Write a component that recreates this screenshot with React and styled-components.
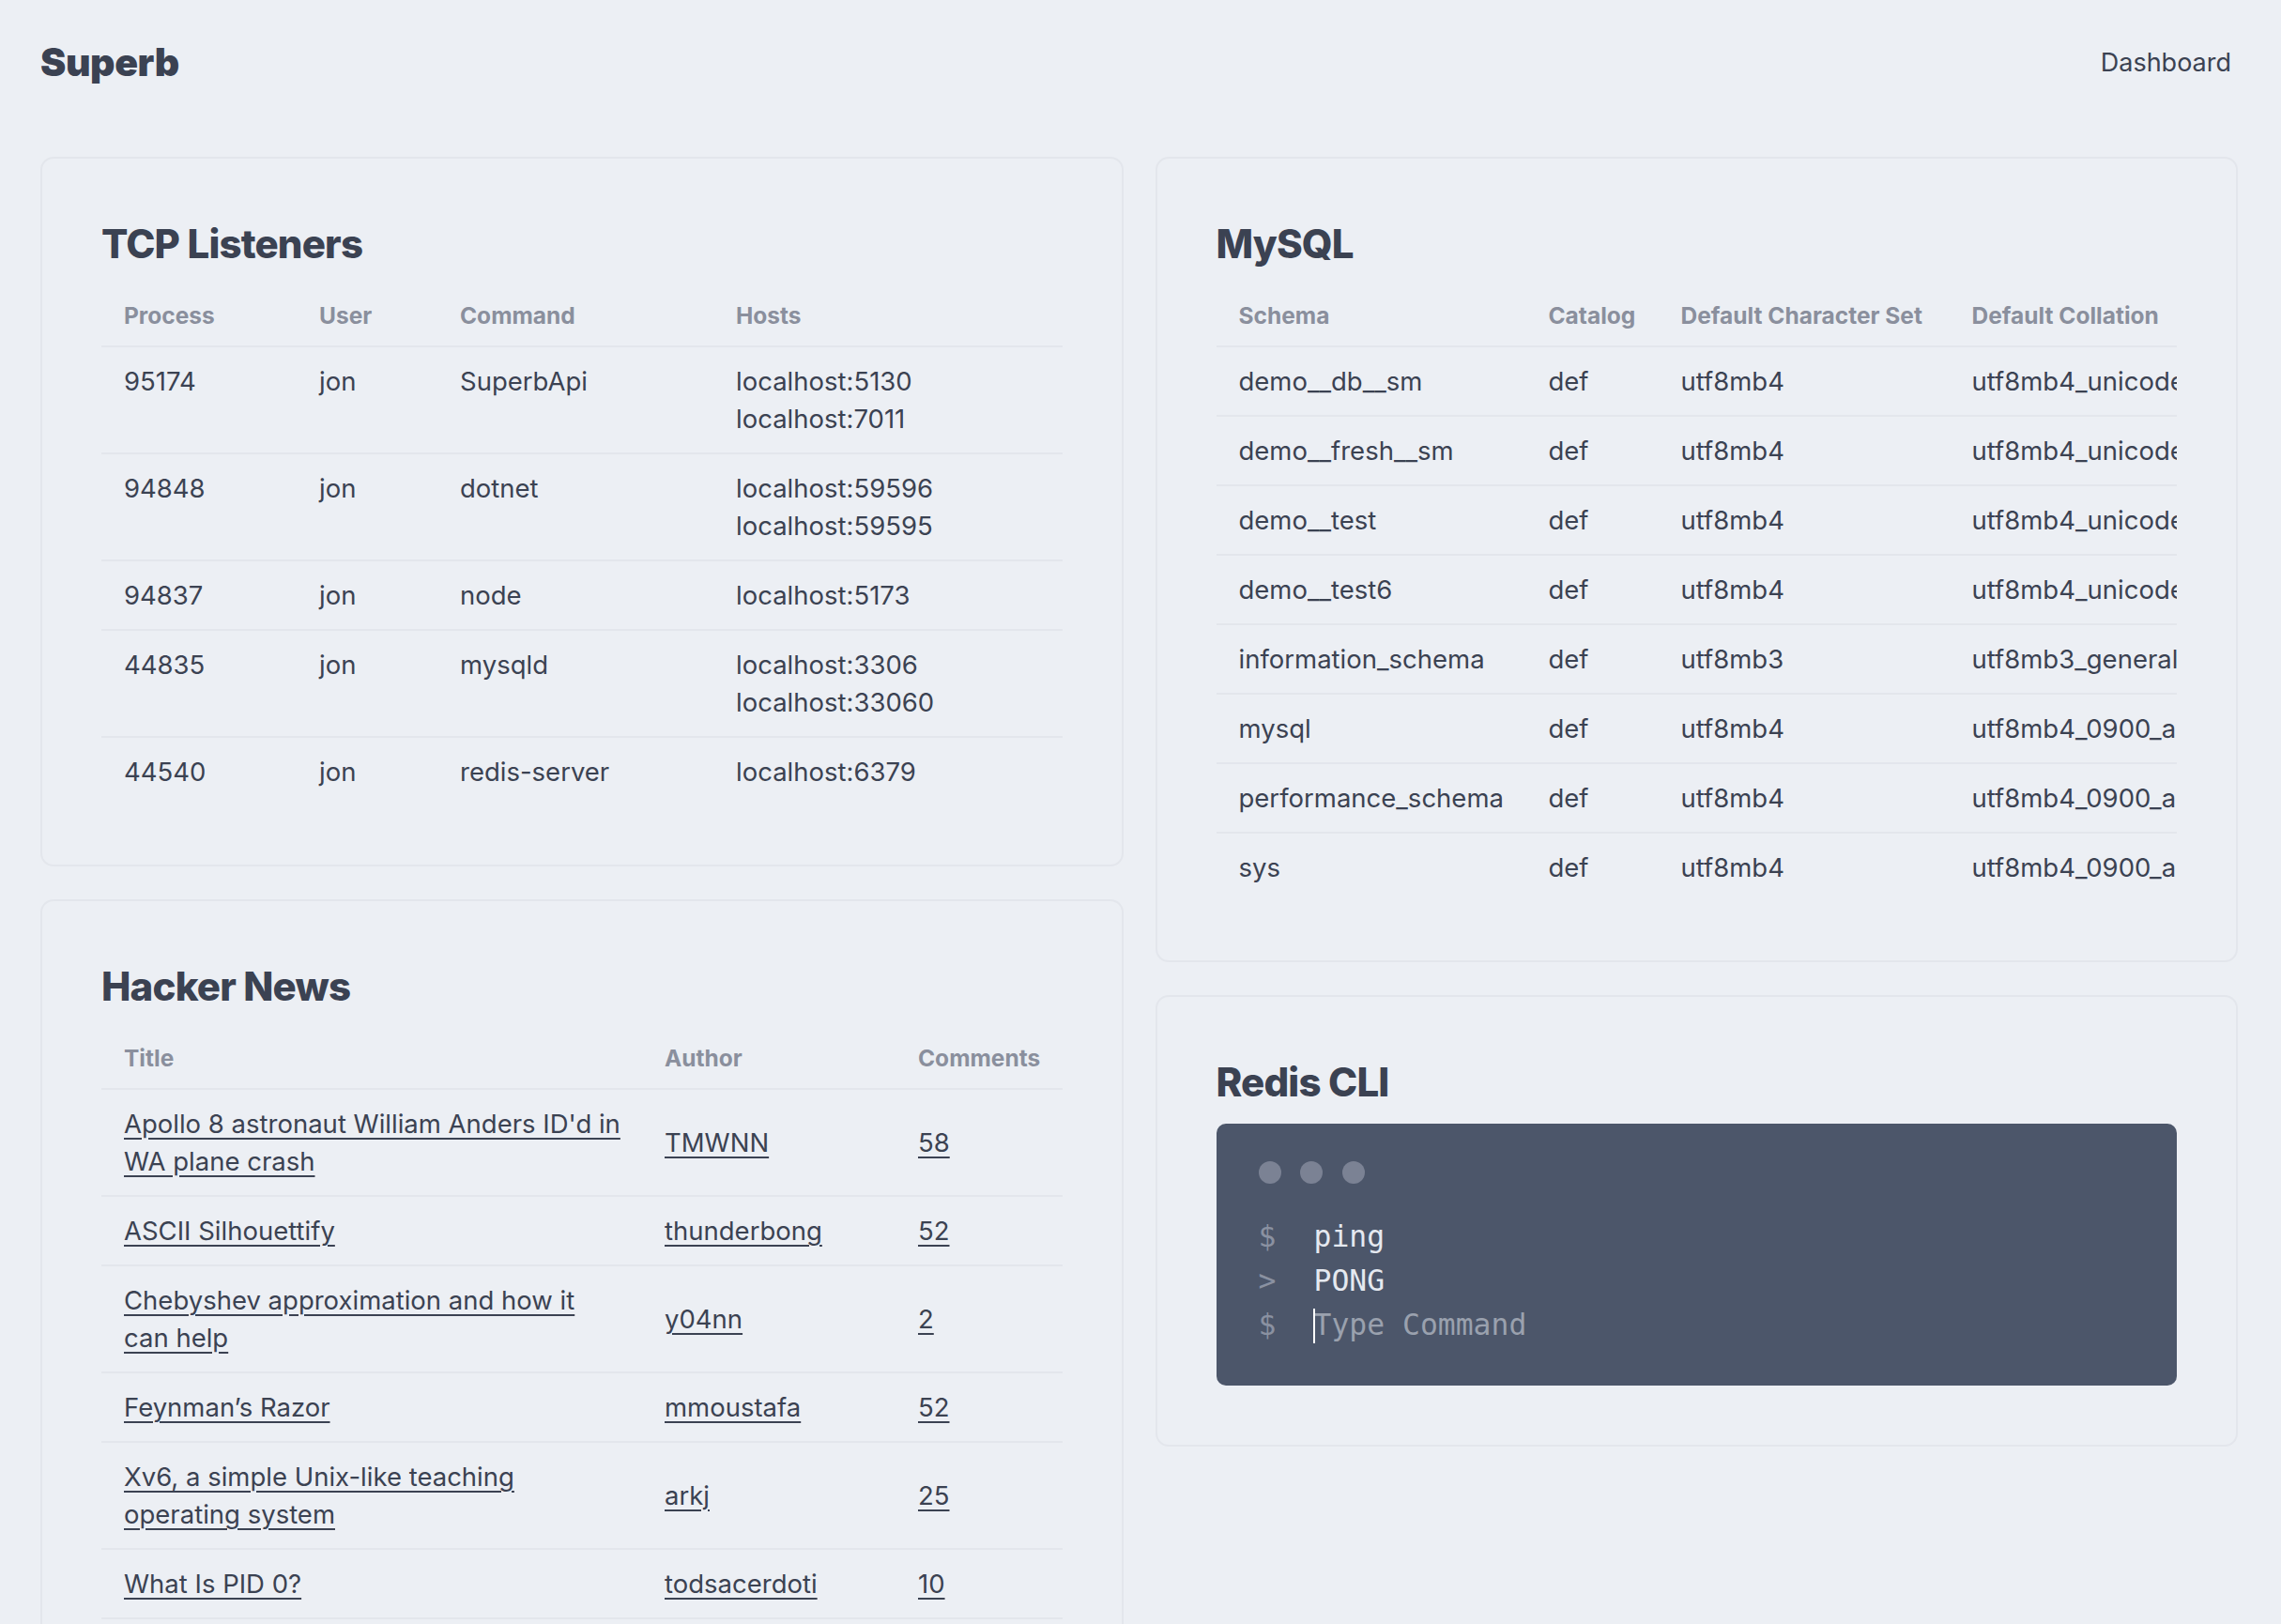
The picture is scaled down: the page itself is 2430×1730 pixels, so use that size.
import React from 'react';
import styled, { createGlobalStyle } from 'styled-components';

const GlobalStyle = createGlobalStyle`
  html, body { margin: 0; padding: 0; background: #eceff4; }
  body {
    font-family: Inter, "Noto Sans", sans-serif;
    color: #3b4252;
    -webkit-font-smoothing: antialiased;
  }
  *, *::before, *::after { box-sizing: border-box; }
`;

const Page = styled.div`
  min-height: 100vh;
  padding: 0 46px 60px 43px;
`;

const Header = styled.header`
  height: 132px;
  display: flex;
  align-items: center;
  justify-content: space-between;
`;

const Brand = styled.a`
  font-size: 41px;
  font-weight: 900;
  letter-spacing: -0.01em;
  color: #3b4252;
  text-decoration: none;
`;

const NavLink = styled.a`
  font-size: 27px;
  padding: 0 7px;
  color: #3b4252;
  text-decoration: none;
`;

const Grid = styled.main`
  margin-top: 35px;
  display: grid;
  grid-template-columns: 1fr 1fr;
  gap: 34px;
  align-items: start;
`;

const Column = styled.div`
  display: flex;
  flex-direction: column;
  gap: 35px;
  min-width: 0;
`;

const Card = styled.section`
  border: 2px solid #e3e6ec;
  border-radius: 14px;
  padding: 63px;
  min-width: 0;
`;

const CardTitle = styled.h2`
  margin: 0 0 16px;
  font-size: 42px;
  line-height: 56px;
  font-weight: 800;
  letter-spacing: -0.02em;
  color: #3b4252;
`;

const TableWrap = styled.div`
  overflow: hidden;
`;

const Table = styled.table`
  border-collapse: collapse;
  table-layout: fixed;
  width: ${(p) => (p.$width ? `${p.$width}px` : '100%')};
`;

const Th = styled.th`
  text-align: left;
  padding: 15px 24px;
  font-size: 24.5px;
  line-height: 34px;
  font-weight: 700;
  color: #8a8f9d;
  white-space: nowrap;
  border-bottom: 2px solid #e3e6ec;
`;

const Row = styled.tr`
  border-bottom: 2px solid #e3e6ec;
  &:last-child {
    border-bottom: ${(p) => (p.$continues ? '2px solid #e3e6ec' : '0')};
  }
`;

const Td = styled.td`
  padding: 16px ${(p) => p.$padRight || 24}px 16px 24px;
  font-size: 27.5px;
  line-height: 40px;
  vertical-align: ${(p) => p.$valign || 'top'};
  white-space: ${(p) => (p.$nowrap ? 'nowrap' : 'normal')};
  overflow: hidden;
`;

const Link = styled.a`
  color: #3b4252;
  text-decoration: underline;
  text-decoration-thickness: 2px;
  text-underline-offset: 5px;
`;

const Terminal = styled.div`
  background: #4c566a;
  border-radius: 10px;
  padding: 40px 45px 41px;
  font-family: "DejaVu Sans Mono", "Liberation Mono", monospace;
  font-size: 31.4px;
  line-height: 47px;
`;

const Dots = styled.div`
  display: flex;
  gap: 20.5px;
  margin-bottom: 32.5px;
`;

const Dot = styled.span`
  width: 24px;
  height: 24px;
  border-radius: 50%;
  background: #7b8294;
`;

const Line = styled.div`
  display: flex;
  align-items: center;
  height: 47px;
`;

const Prompt = styled.span`
  flex: none;
  width: 59px;
  color: #8a91a1;
`;

const Output = styled.span`
  color: #e5e9f0;
`;

const InputWrap = styled.div`
  position: relative;
  flex: 1;
`;

const Input = styled.input`
  display: block;
  width: 100%;
  height: 47px;
  margin: 0;
  padding: 0;
  border: 0;
  outline: none;
  background: transparent;
  font: inherit;
  line-height: 47px;
  color: #e5e9f0;
  caret-color: transparent;
  &::placeholder {
    color: #9aa1ae;
  }
`;

const Caret = styled.span`
  position: absolute;
  left: -1px;
  top: 6px;
  width: 2px;
  height: 37px;
  background: #ffffff;
`;

const tcp = [
  { pid: '95174', user: 'jon', cmd: 'SuperbApi', hosts: ['localhost:5130', 'localhost:7011'] },
  { pid: '94848', user: 'jon', cmd: 'dotnet', hosts: ['localhost:59596', 'localhost:59595'] },
  { pid: '94837', user: 'jon', cmd: 'node', hosts: ['localhost:5173'] },
  { pid: '44835', user: 'jon', cmd: 'mysqld', hosts: ['localhost:3306', 'localhost:33060'] },
  { pid: '44540', user: 'jon', cmd: 'redis-server', hosts: ['localhost:6379'] },
];

const schemas = [
  ['demo__db__sm', 'def', 'utf8mb4', 'utf8mb4_unicode_ci'],
  ['demo__fresh__sm', 'def', 'utf8mb4', 'utf8mb4_unicode_ci'],
  ['demo__test', 'def', 'utf8mb4', 'utf8mb4_unicode_ci'],
  ['demo__test6', 'def', 'utf8mb4', 'utf8mb4_unicode_ci'],
  ['information_schema', 'def', 'utf8mb3', 'utf8mb3_general_ci'],
  ['mysql', 'def', 'utf8mb4', 'utf8mb4_0900_ai_ci'],
  ['performance_schema', 'def', 'utf8mb4', 'utf8mb4_0900_ai_ci'],
  ['sys', 'def', 'utf8mb4', 'utf8mb4_0900_ai_ci'],
];

const news = [
  { title: "Apollo 8 astronaut William Anders ID'd in WA plane crash", author: 'TMWNN', comments: 58 },
  { title: 'ASCII Silhouettify', author: 'thunderbong', comments: 52 },
  { title: 'Chebyshev approximation and how it can help', author: 'y04nn', comments: 2 },
  { title: 'Feynman’s Razor', author: 'mmoustafa', comments: 52 },
  { title: 'Xv6, a simple Unix-like teaching operating system', author: 'arkj', comments: 25 },
  { title: 'What Is PID 0?', author: 'todsacerdoti', comments: 10 },
];

function ColGroup({ widths }) {
  return (
    <colgroup>
      {widths.map((w, i) => (
        <col key={i} style={{ width: w }} />
      ))}
    </colgroup>
  );
}

export default function App() {
  return (
    <>
      <GlobalStyle />
      <Page>
        <Header>
          <Brand href="#">Superb</Brand>
          <NavLink href="#">Dashboard</NavLink>
        </Header>
        <Grid>
          <Column>
            <Card>
              <CardTitle>TCP Listeners</CardTitle>
              <TableWrap>
                <Table>
                  <ColGroup widths={[208, 150, 294, 372]} />
                  <thead>
                    <tr>
                      <Th>Process</Th>
                      <Th>User</Th>
                      <Th>Command</Th>
                      <Th>Hosts</Th>
                    </tr>
                  </thead>
                  <tbody>
                    {tcp.map((r) => (
                      <Row key={r.pid}>
                        <Td>{r.pid}</Td>
                        <Td>{r.user}</Td>
                        <Td>{r.cmd}</Td>
                        <Td>
                          {r.hosts.map((h) => (
                            <div key={h}>{h}</div>
                          ))}
                        </Td>
                      </Row>
                    ))}
                  </tbody>
                </Table>
              </TableWrap>
            </Card>
            <Card>
              <CardTitle>Hacker News</CardTitle>
              <TableWrap>
                <Table>
                  <ColGroup widths={[576, 270, 178]} />
                  <thead>
                    <tr>
                      <Th>Title</Th>
                      <Th>Author</Th>
                      <Th>Comments</Th>
                    </tr>
                  </thead>
                  <tbody>
                    {news.map((n) => (
                      <Row key={n.title} $continues>
                        <Td $valign="middle" $padRight={20}>
                          <Link href="#">{n.title}</Link>
                        </Td>
                        <Td $valign="middle">
                          <Link href="#">{n.author}</Link>
                        </Td>
                        <Td $valign="middle">
                          <Link href="#">{n.comments}</Link>
                        </Td>
                      </Row>
                    ))}
                  </tbody>
                </Table>
              </TableWrap>
            </Card>
          </Column>
          <Column>
            <Card>
              <CardTitle>MySQL</CardTitle>
              <TableWrap>
                <Table $width={1121}>
                  <ColGroup widths={[330, 141, 310, 340]} />
                  <thead>
                    <tr>
                      <Th>Schema</Th>
                      <Th>Catalog</Th>
                      <Th>Default Character Set</Th>
                      <Th>Default Collation</Th>
                    </tr>
                  </thead>
                  <tbody>
                    {schemas.map((s) => (
                      <Row key={s[0]}>
                        {s.map((c, i) => (
                          <Td key={i} $nowrap>
                            {c}
                          </Td>
                        ))}
                      </Row>
                    ))}
                  </tbody>
                </Table>
              </TableWrap>
            </Card>
            <Card>
              <CardTitle>Redis CLI</CardTitle>
              <Terminal>
                <Dots>
                  <Dot />
                  <Dot />
                  <Dot />
                </Dots>
                <Line>
                  <Prompt>$</Prompt>
                  <Output>ping</Output>
                </Line>
                <Line>
                  <Prompt>&gt;</Prompt>
                  <Output>PONG</Output>
                </Line>
                <Line>
                  <Prompt>$</Prompt>
                  <InputWrap>
                    <Caret />
                    <Input placeholder="Type Command" />
                  </InputWrap>
                </Line>
              </Terminal>
            </Card>
          </Column>
        </Grid>
      </Page>
    </>
  );
}
